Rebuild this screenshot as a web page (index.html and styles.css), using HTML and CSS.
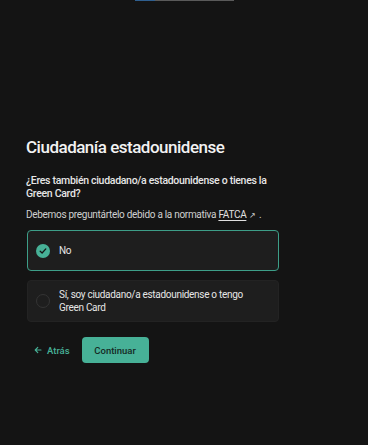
FILE: index.html
```html
<!DOCTYPE html>
<html lang="es">
<head>
  <meta charset="UTF-8">
  <title>Ciudadanía estadounidense</title>
  <link rel="stylesheet" href="styles.css">
</head>
<body>

<div class="progress">
  <div class="progress-fill" style="width: 20%"></div>
</div>

<div class="page">
  <h1 class="title">Ciudadanía estadounidense</h1>
  <p class="question">¿Eres también ciudadano/a estadounidense o tienes la Green Card?</p>
  <p class="hint">Debemos preguntártelo debido a la normativa <a href="#" class="link">FATCA</a><span class="ext">&#8599;</span>.</p>

  <div class="options">
    <label class="option selected">
      <span class="check">
        <svg width="8" height="8" viewBox="0 0 8 8"><path d="M1.2 4.2 L3.1 6 L6.8 1.9" fill="none" stroke="#141414" stroke-width="1.3" stroke-linecap="round" stroke-linejoin="round"/></svg>
      </span>
      <span class="option-text">No</span>
    </label>
    <label class="option">
      <span class="radio"></span>
      <span class="option-text">Sí, soy ciudadano/a estadounidense o tengo Green Card</span>
    </label>
  </div>

  <div class="actions">
    <a href="#" class="back">
      <svg width="8" height="8" viewBox="0 0 8 8"><path d="M7 4 H1.2 M3.8 1.3 L1.2 4 L3.8 6.7" fill="none" stroke="currentColor" stroke-width="1.1" stroke-linecap="round" stroke-linejoin="round"/></svg>
      Atrás
    </a>
    <button class="next">Continuar</button>
  </div>
</div>

</body>
</html>
```

FILE: styles.css
```css
* {
  margin: 0;
  padding: 0;
  box-sizing: border-box;
}

html, body {
  height: 100%;
  background-color: #141414;
  color: #e8e8e8;
  font-family: Roboto, "Liberation Sans", sans-serif;
  overflow: hidden;
}

.progress {
  width: 99px;
  height: 1px;
  margin-left: 135px;
  background-color: #5a5a5a;
}

.progress-fill {
  height: 100%;
  background-color: #2f5f8f;
}

.page {
  width: 253px;
  margin-left: 26px;
  padding-top: 136px;
}

.title {
  font-size: 17px;
  font-weight: 500;
  letter-spacing: -0.5px;
  color: #f2f2f2;
  margin-bottom: 17px;
}

.question {
  font-size: 10.5px;
  font-weight: 500;
  line-height: 13px;
  letter-spacing: -0.3px;
  color: #e6e6e6;
  margin-bottom: 8px;
}

.hint {
  font-size: 10px;
  line-height: 13px;
  letter-spacing: -0.3px;
  color: #d0d0d0;
  margin-bottom: 8px;
}

.link {
  color: #e0e0e0;
  text-decoration: underline;
  text-underline-offset: 2px;
}

.ext {
  font-size: 8px;
  margin: 0 3px 0 3px;
  color: #cfcfcf;
}

.options {
  display: flex;
  flex-direction: column;
  gap: 9px;
  margin-left: 1px;
}

.option {
  display: flex;
  align-items: center;
  gap: 9px;
  min-height: 41px;
  padding: 7px 30px 7px 8px;
  background-color: #1e1e1e;
  border: 1px solid #232323;
  border-radius: 4px;
  cursor: pointer;
}

.option.selected {
  border-color: #3d9e88;
}

.check, .radio {
  flex: none;
  width: 14px;
  height: 14px;
  border-radius: 50%;
  display: flex;
  align-items: center;
  justify-content: center;
}

.check {
  background-color: #47b197;
}

.radio {
  border: 1px solid #343434;
}

.option-text {
  font-size: 10px;
  line-height: 13px;
  letter-spacing: -0.3px;
  color: #e6e6e6;
}

.actions {
  display: flex;
  align-items: center;
  gap: 12px;
  margin-top: 15px;
  margin-left: 8px;
}

.back {
  display: flex;
  align-items: center;
  gap: 5px;
  font-size: 9.5px;
  font-weight: 500;
  color: #47b197;
  text-decoration: none;
}

.next {
  font-family: inherit;
  font-size: 9.5px;
  font-weight: 500;
  width: 67px;
  height: 26px;
  border: none;
  border-radius: 4px;
  background-color: #47b197;
  color: #152a24;
  cursor: pointer;
}
```
